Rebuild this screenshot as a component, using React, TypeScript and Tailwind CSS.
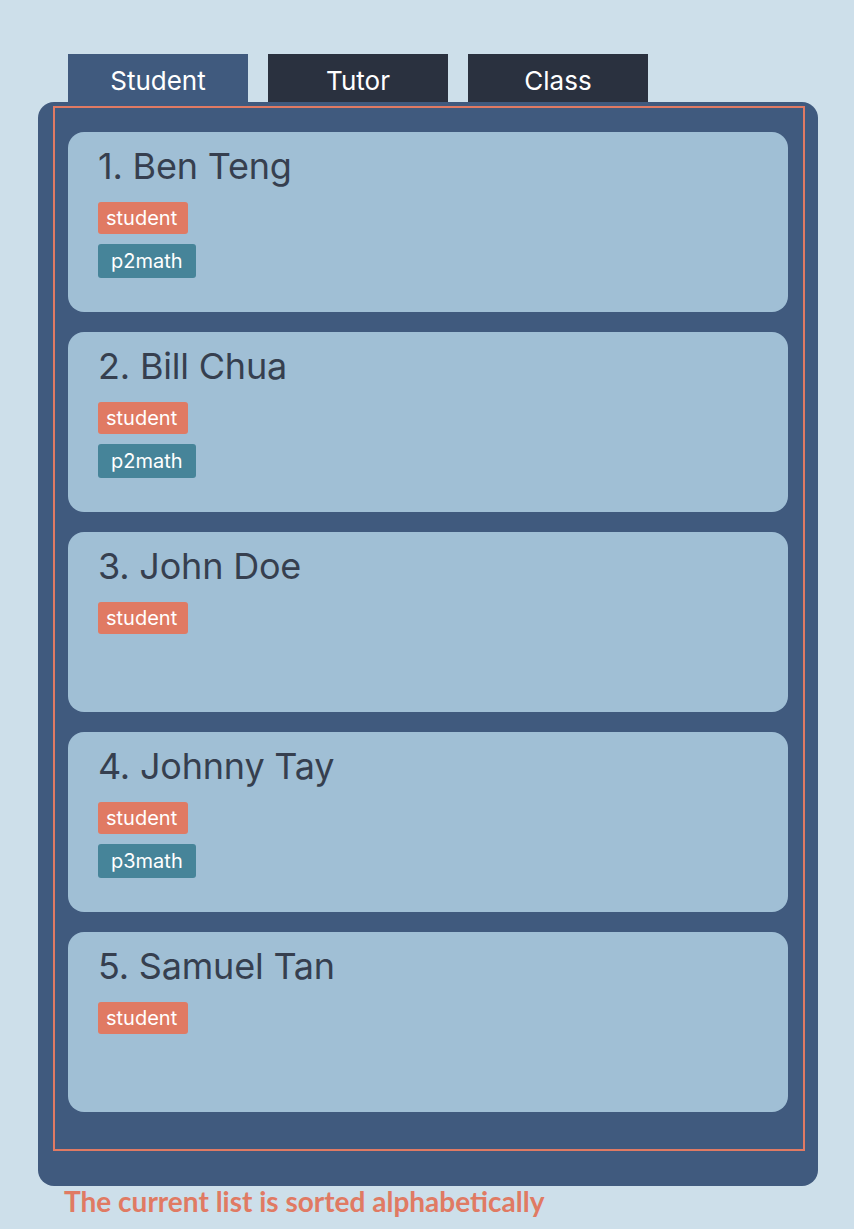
import React from "react";

type Person = {
  name: string;
  tags: { label: string; kind: "role" | "class" }[];
};

const people: Person[] = [
  { name: "Ben Teng", tags: [{ label: "student", kind: "role" }, { label: "p2math", kind: "class" }] },
  { name: "Bill Chua", tags: [{ label: "student", kind: "role" }, { label: "p2math", kind: "class" }] },
  { name: "John Doe", tags: [{ label: "student", kind: "role" }] },
  { name: "Johnny Tay", tags: [{ label: "student", kind: "role" }, { label: "p3math", kind: "class" }] },
  { name: "Samuel Tan", tags: [{ label: "student", kind: "role" }] },
];

const tabs = ["Student", "Tutor", "Class"];

function PersonCard({ index, person }: { index: number; person: Person }) {
  return (
    <div className="h-[180px] rounded-2xl bg-[#a0bfd5] px-[30px] pt-[12px]">
      <div className="text-[36px] leading-[44px] text-[#363f4f] tracking-[-0.2px]">
        {index}. {person.name}
      </div>
      <div className="mt-[14px] flex flex-col items-start gap-[10px]">
        {person.tags.map((t) => (
          <span
            key={t.label}
            className={
              t.kind === "role"
                ? "h-[32px] rounded-[3px] bg-[#e07a63] pl-[8px] pr-[11px] text-[20px] leading-[32px] text-white"
                : "h-[34px] rounded-[3px] bg-[#468499] px-[13px] text-[20px] leading-[34px] text-white"
            }
          >
            {t.label}
          </span>
        ))}
      </div>
    </div>
  );
}

export default function App() {
  return (
    <div
      className="min-h-screen bg-[#cddfea] pt-[54px] pl-[38px]"
      style={{ fontFamily: "Inter, 'Noto Sans', sans-serif" }}
    >
      <div className="flex gap-5 pl-[30px]">
        {tabs.map((t, i) => (
          <div
            key={t}
            className={
              (i === 0 ? "bg-[#405a7e] " : "bg-[#2a313f] ") +
              "flex h-[48px] w-[180px] items-center justify-center pt-[4px] text-[26px] text-white"
            }
          >
            {t}
          </div>
        ))}
      </div>
      <div className="h-[1084px] w-[780px] rounded-2xl bg-[#405a7e] px-[15px] pt-[4px]">
        <div className="h-[1045px] w-[752px] border-2 border-[#e07a63] pl-[13px] pr-[15px] pt-[24px]">
          <div className="flex flex-col gap-5">
            {people.map((p, i) => (
              <PersonCard key={p.name} index={i + 1} person={p} />
            ))}
          </div>
        </div>
      </div>
      <div
        className="pl-[26px] text-[28px] font-bold leading-[30px] text-[#e07a63]"
        style={{ fontFamily: "Lato, sans-serif" }}
      >
        The current list is sorted alphabetically
      </div>
    </div>
  );
}
